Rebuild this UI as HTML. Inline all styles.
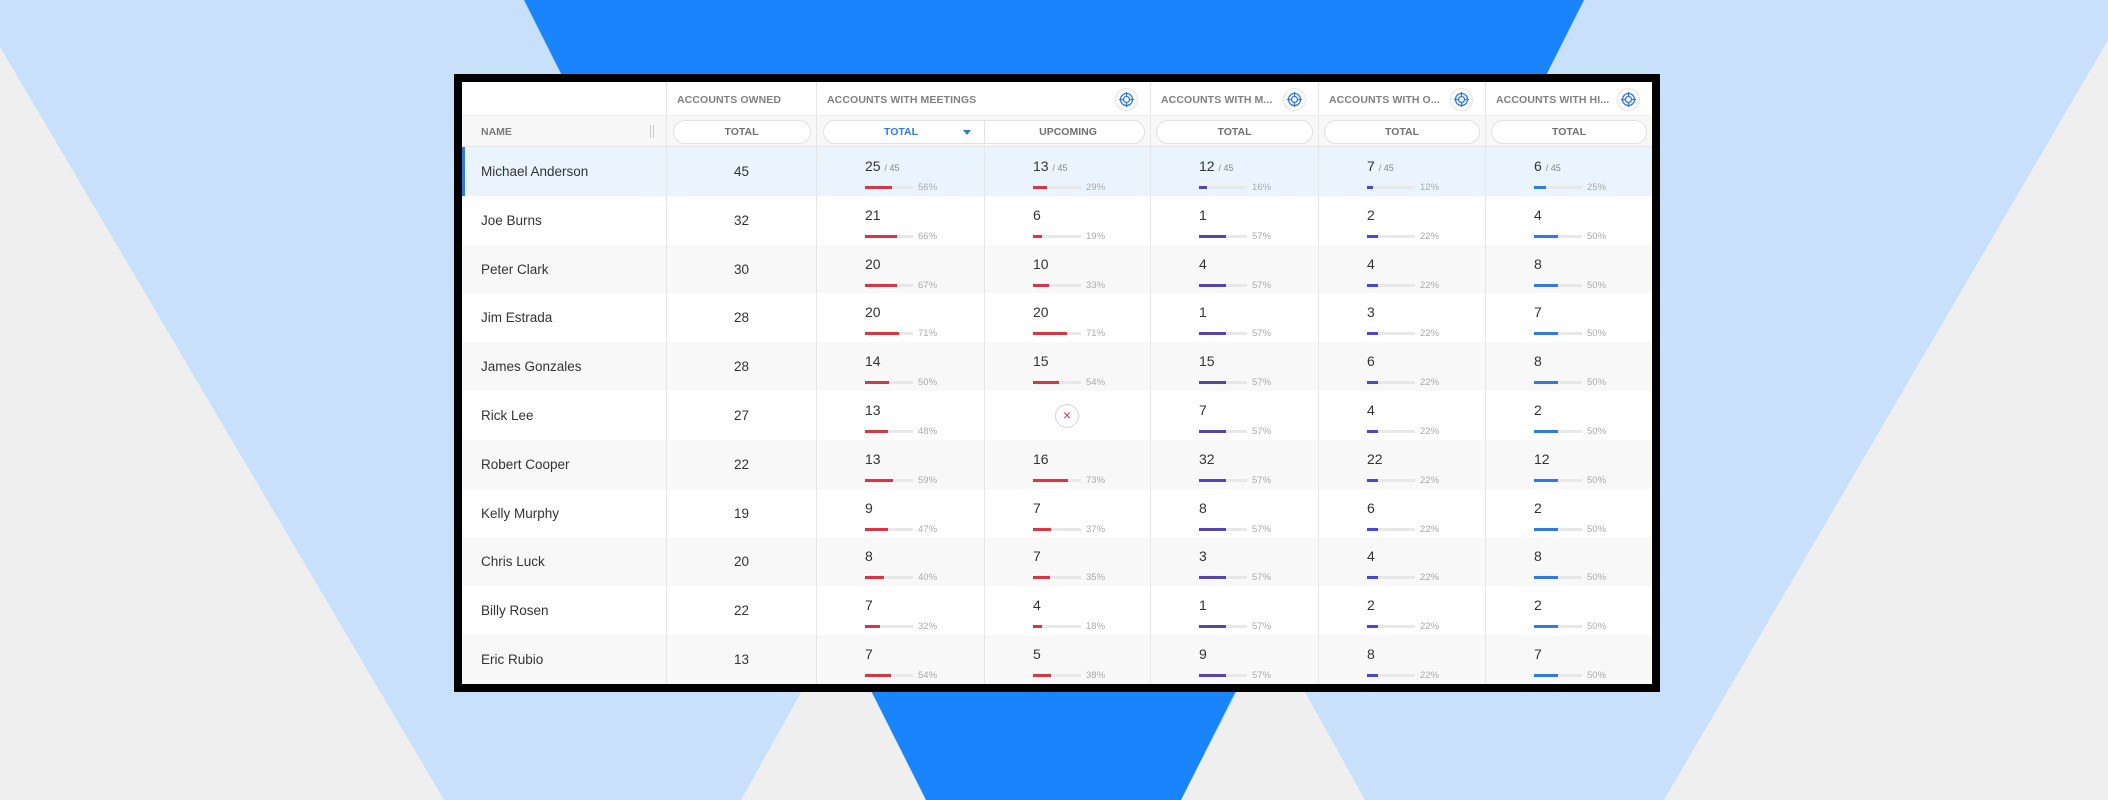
<!DOCTYPE html>
<html><head><meta charset="utf-8"><style>
*{box-sizing:border-box;margin:0;padding:0}
body{width:2108px;height:800px;overflow:hidden;background:#c9e0fb;font-family:"Liberation Sans",sans-serif;position:relative}
svg.bg{position:absolute;left:0;top:0}
.frame{position:absolute;left:454px;top:74px;width:1206px;height:618px;background:#000}
.tbl{position:absolute;left:462px;top:82px;width:1190px;height:602px;background:#fff;overflow:hidden}
.h1,.h2,.row{position:absolute;left:0;width:1190px;display:flex}
.h1{top:0;height:34px;background:#fff;border-bottom:1px solid #eee}
.h2{top:34px;height:31px;background:#f7f7f7;border-bottom:1px solid #e6e6e6}
.c{position:relative;height:100%;border-right:1px solid #e6e6e6;flex:none}
.w0{width:205px}.w1{width:150px}.w2{width:168px}.w3{width:166px}.w4{width:168px}.w5{width:167px}.w6{width:166px}
.ht{position:absolute;left:10px;top:12px;font-size:10.5px;font-weight:bold;color:#808080;letter-spacing:.1px;white-space:nowrap}
.ico{position:absolute;top:6px;width:23px;height:23px;border-radius:50%;border:1px solid #e3e3e3;background:#fff}
.ico svg{position:absolute;left:2px;top:2px}
.pill{position:absolute;top:4px;height:24px;border:1px solid #e2e2e2;border-radius:12px;background:#fff}
.pt{position:absolute;top:10px;font-size:10.5px;font-weight:bold;color:#707070;text-align:center}
.row{height:48.8px}
.g{background:#f8f8f8}.hl{background:#eaf4fe}
.nm{position:absolute;left:19px;top:17px;font-size:13.5px;color:#333}
.ow{position:absolute;left:0;right:0;top:17px;text-align:center;font-size:13.5px;color:#333}
.n{position:absolute;left:48px;top:11px;font-size:14px;color:#333}
.n small{font-size:9px;color:#888}
.bar{position:absolute;left:48px;top:39px;width:48px;height:3px;background:#e8e8e8}
.bar i{display:block;height:3px}
.p{position:absolute;left:101px;top:35px;font-size:9.5px;color:#aaa}
.r i{background:#d93645}.pu i{background:#5744ad}.in i{background:#4848d4}.b i{background:#2f7be0}
</style></head><body>
<svg class="bg" width="2108" height="800">
<polygon points="0,47 0,800 444,800" fill="#efefef"/>
<polygon points="741,800 926,800 838,626" fill="#efefef"/>
<polygon points="1181,800 1365,800 1270,629" fill="#efefef"/>
<polygon points="2108,40 2108,800 1664,800" fill="#efefef"/>
<polygon points="524,0 1584,0 1181,800 926,800" fill="#1a84fc"/>
</svg>
<div class="frame"></div>
<div class="tbl">
<div class="h1">
<div class="c w0"></div>
<div class="c w1"><span class="ht">ACCOUNTS OWNED</span></div>
<div class="c" style="width:334px"><span class="ht">ACCOUNTS WITH MEETINGS</span><div class="ico" style="right:12px"><svg width="17" height="17" viewBox="0 0 17 17" fill="none" stroke="#2f7be0" stroke-width="1.3"><circle cx="8.5" cy="8.5" r="6"/><circle cx="8.5" cy="8.5" r="3"/><path d="M8.5 1v4M8.5 12v4M1 8.5h4M12 8.5h4"/></svg></div></div>
<div class="c w4"><span class="ht">ACCOUNTS WITH M...</span><div class="ico" style="right:12px"><svg width="17" height="17" viewBox="0 0 17 17" fill="none" stroke="#2f7be0" stroke-width="1.3"><circle cx="8.5" cy="8.5" r="6"/><circle cx="8.5" cy="8.5" r="3"/><path d="M8.5 1v4M8.5 12v4M1 8.5h4M12 8.5h4"/></svg></div></div>
<div class="c w5"><span class="ht">ACCOUNTS WITH O...</span><div class="ico" style="right:12px"><svg width="17" height="17" viewBox="0 0 17 17" fill="none" stroke="#2f7be0" stroke-width="1.3"><circle cx="8.5" cy="8.5" r="6"/><circle cx="8.5" cy="8.5" r="3"/><path d="M8.5 1v4M8.5 12v4M1 8.5h4M12 8.5h4"/></svg></div></div>
<div class="c w6" style="border:0"><span class="ht">ACCOUNTS WITH HI...</span><div class="ico" style="right:12px"><svg width="17" height="17" viewBox="0 0 17 17" fill="none" stroke="#2f7be0" stroke-width="1.3"><circle cx="8.5" cy="8.5" r="6"/><circle cx="8.5" cy="8.5" r="3"/><path d="M8.5 1v4M8.5 12v4M1 8.5h4M12 8.5h4"/></svg></div></div>
</div>
<div class="h2">
<div class="c w0"><span class="pt" style="left:19px;color:#7a7a7a">NAME</span><span style="position:absolute;left:188px;top:9px;width:4px;height:13px;border-left:1px solid #ccc;border-right:1px solid #ccc"></span></div>
<div class="c w1"><div class="pill" style="left:6px;right:5px"></div><span class="pt" style="left:0;right:0">TOTAL</span></div>
<div class="c" style="width:334px"><div class="pill" style="left:6px;right:5px"></div><span style="position:absolute;left:167px;top:4px;height:24px;border-left:1px solid #e2e2e2"></span><span class="pt" style="left:0;width:168px;color:#2f7be0">TOTAL</span><span style="position:absolute;left:146px;top:14px;border:4px solid transparent;border-top:5px solid #2f7be0"></span><span class="pt" style="left:168px;width:166px">UPCOMING</span></div>
<div class="c w4"><div class="pill" style="left:5px;right:5px"></div><span class="pt" style="left:0;right:0">TOTAL</span></div>
<div class="c w5"><div class="pill" style="left:5px;right:5px"></div><span class="pt" style="left:0;right:0">TOTAL</span></div>
<div class="c w6" style="border:0"><div class="pill" style="left:5px;right:5px"></div><span class="pt" style="left:0;right:0">TOTAL</span></div>
</div>

<div class="row hl" style="top:65px;border-left:3px solid #2f7be0"><div class="c w0" style="width:202px"><span class="nm" style="left:16px">Michael Anderson</span></div><div class="c w1"><span class="ow">45</span></div>
<div class="c w2"><span class="n">25 <small>/ 45</small></span><div class="bar r"><i style="width:56%"></i></div><span class="p">56%</span></div>
<div class="c w3"><span class="n">13 <small>/ 45</small></span><div class="bar r"><i style="width:29%"></i></div><span class="p">29%</span></div>
<div class="c w4"><span class="n">12 <small>/ 45</small></span><div class="bar pu"><i style="width:16%"></i></div><span class="p">16%</span></div>
<div class="c w5"><span class="n">7 <small>/ 45</small></span><div class="bar in"><i style="width:12%"></i></div><span class="p">12%</span></div>
<div class="c w6" style="border:0"><span class="n">6 <small>/ 45</small></span><div class="bar b"><i style="width:25%"></i></div><span class="p">25%</span></div></div>

<div class="row" style="top:113.8px"><div class="c w0"><span class="nm">Joe Burns</span></div><div class="c w1"><span class="ow">32</span></div>
<div class="c w2"><span class="n">21</span><div class="bar r"><i style="width:66%"></i></div><span class="p">66%</span></div>
<div class="c w3"><span class="n">6</span><div class="bar r"><i style="width:19%"></i></div><span class="p">19%</span></div>
<div class="c w4"><span class="n">1</span><div class="bar pu"><i style="width:57%"></i></div><span class="p">57%</span></div>
<div class="c w5"><span class="n">2</span><div class="bar in"><i style="width:22%"></i></div><span class="p">22%</span></div>
<div class="c w6" style="border:0"><span class="n">4</span><div class="bar b"><i style="width:50%"></i></div><span class="p">50%</span></div></div>

<div class="row g" style="top:162.6px"><div class="c w0"><span class="nm">Peter Clark</span></div><div class="c w1"><span class="ow">30</span></div>
<div class="c w2"><span class="n">20</span><div class="bar r"><i style="width:67%"></i></div><span class="p">67%</span></div>
<div class="c w3"><span class="n">10</span><div class="bar r"><i style="width:33%"></i></div><span class="p">33%</span></div>
<div class="c w4"><span class="n">4</span><div class="bar pu"><i style="width:57%"></i></div><span class="p">57%</span></div>
<div class="c w5"><span class="n">4</span><div class="bar in"><i style="width:22%"></i></div><span class="p">22%</span></div>
<div class="c w6" style="border:0"><span class="n">8</span><div class="bar b"><i style="width:50%"></i></div><span class="p">50%</span></div></div>

<div class="row" style="top:211.4px"><div class="c w0"><span class="nm">Jim Estrada</span></div><div class="c w1"><span class="ow">28</span></div>
<div class="c w2"><span class="n">20</span><div class="bar r"><i style="width:71%"></i></div><span class="p">71%</span></div>
<div class="c w3"><span class="n">20</span><div class="bar r"><i style="width:71%"></i></div><span class="p">71%</span></div>
<div class="c w4"><span class="n">1</span><div class="bar pu"><i style="width:57%"></i></div><span class="p">57%</span></div>
<div class="c w5"><span class="n">3</span><div class="bar in"><i style="width:22%"></i></div><span class="p">22%</span></div>
<div class="c w6" style="border:0"><span class="n">7</span><div class="bar b"><i style="width:50%"></i></div><span class="p">50%</span></div></div>

<div class="row g" style="top:260.2px"><div class="c w0"><span class="nm">James Gonzales</span></div><div class="c w1"><span class="ow">28</span></div>
<div class="c w2"><span class="n">14</span><div class="bar r"><i style="width:50%"></i></div><span class="p">50%</span></div>
<div class="c w3"><span class="n">15</span><div class="bar r"><i style="width:54%"></i></div><span class="p">54%</span></div>
<div class="c w4"><span class="n">15</span><div class="bar pu"><i style="width:57%"></i></div><span class="p">57%</span></div>
<div class="c w5"><span class="n">6</span><div class="bar in"><i style="width:22%"></i></div><span class="p">22%</span></div>
<div class="c w6" style="border:0"><span class="n">8</span><div class="bar b"><i style="width:50%"></i></div><span class="p">50%</span></div></div>

<div class="row" style="top:309px"><div class="c w0"><span class="nm">Rick Lee</span></div><div class="c w1"><span class="ow">27</span></div>
<div class="c w2"><span class="n">13</span><div class="bar r"><i style="width:48%"></i></div><span class="p">48%</span></div>
<div class="c w3"><span style="position:absolute;left:70px;top:13px;width:24px;height:24px;border:1px solid #d6d6d6;border-radius:50%;background:#fff;color:#d93645;font-size:14px;line-height:21px;text-align:center">×</span></div>
<div class="c w4"><span class="n">7</span><div class="bar pu"><i style="width:57%"></i></div><span class="p">57%</span></div>
<div class="c w5"><span class="n">4</span><div class="bar in"><i style="width:22%"></i></div><span class="p">22%</span></div>
<div class="c w6" style="border:0"><span class="n">2</span><div class="bar b"><i style="width:50%"></i></div><span class="p">50%</span></div></div>

<div class="row g" style="top:357.8px"><div class="c w0"><span class="nm">Robert Cooper</span></div><div class="c w1"><span class="ow">22</span></div>
<div class="c w2"><span class="n">13</span><div class="bar r"><i style="width:59%"></i></div><span class="p">59%</span></div>
<div class="c w3"><span class="n">16</span><div class="bar r"><i style="width:73%"></i></div><span class="p">73%</span></div>
<div class="c w4"><span class="n">32</span><div class="bar pu"><i style="width:57%"></i></div><span class="p">57%</span></div>
<div class="c w5"><span class="n">22</span><div class="bar in"><i style="width:22%"></i></div><span class="p">22%</span></div>
<div class="c w6" style="border:0"><span class="n">12</span><div class="bar b"><i style="width:50%"></i></div><span class="p">50%</span></div></div>

<div class="row" style="top:406.6px"><div class="c w0"><span class="nm">Kelly Murphy</span></div><div class="c w1"><span class="ow">19</span></div>
<div class="c w2"><span class="n">9</span><div class="bar r"><i style="width:47%"></i></div><span class="p">47%</span></div>
<div class="c w3"><span class="n">7</span><div class="bar r"><i style="width:37%"></i></div><span class="p">37%</span></div>
<div class="c w4"><span class="n">8</span><div class="bar pu"><i style="width:57%"></i></div><span class="p">57%</span></div>
<div class="c w5"><span class="n">6</span><div class="bar in"><i style="width:22%"></i></div><span class="p">22%</span></div>
<div class="c w6" style="border:0"><span class="n">2</span><div class="bar b"><i style="width:50%"></i></div><span class="p">50%</span></div></div>

<div class="row g" style="top:455.4px"><div class="c w0"><span class="nm">Chris Luck</span></div><div class="c w1"><span class="ow">20</span></div>
<div class="c w2"><span class="n">8</span><div class="bar r"><i style="width:40%"></i></div><span class="p">40%</span></div>
<div class="c w3"><span class="n">7</span><div class="bar r"><i style="width:35%"></i></div><span class="p">35%</span></div>
<div class="c w4"><span class="n">3</span><div class="bar pu"><i style="width:57%"></i></div><span class="p">57%</span></div>
<div class="c w5"><span class="n">4</span><div class="bar in"><i style="width:22%"></i></div><span class="p">22%</span></div>
<div class="c w6" style="border:0"><span class="n">8</span><div class="bar b"><i style="width:50%"></i></div><span class="p">50%</span></div></div>

<div class="row" style="top:504.2px"><div class="c w0"><span class="nm">Billy Rosen</span></div><div class="c w1"><span class="ow">22</span></div>
<div class="c w2"><span class="n">7</span><div class="bar r"><i style="width:32%"></i></div><span class="p">32%</span></div>
<div class="c w3"><span class="n">4</span><div class="bar r"><i style="width:18%"></i></div><span class="p">18%</span></div>
<div class="c w4"><span class="n">1</span><div class="bar pu"><i style="width:57%"></i></div><span class="p">57%</span></div>
<div class="c w5"><span class="n">2</span><div class="bar in"><i style="width:22%"></i></div><span class="p">22%</span></div>
<div class="c w6" style="border:0"><span class="n">2</span><div class="bar b"><i style="width:50%"></i></div><span class="p">50%</span></div></div>

<div class="row g" style="top:553px"><div class="c w0"><span class="nm">Eric Rubio</span></div><div class="c w1"><span class="ow">13</span></div>
<div class="c w2"><span class="n">7</span><div class="bar r"><i style="width:54%"></i></div><span class="p">54%</span></div>
<div class="c w3"><span class="n">5</span><div class="bar r"><i style="width:38%"></i></div><span class="p">38%</span></div>
<div class="c w4"><span class="n">9</span><div class="bar pu"><i style="width:57%"></i></div><span class="p">57%</span></div>
<div class="c w5"><span class="n">8</span><div class="bar in"><i style="width:22%"></i></div><span class="p">22%</span></div>
<div class="c w6" style="border:0"><span class="n">7</span><div class="bar b"><i style="width:50%"></i></div><span class="p">50%</span></div></div>
</div>
</body></html>
